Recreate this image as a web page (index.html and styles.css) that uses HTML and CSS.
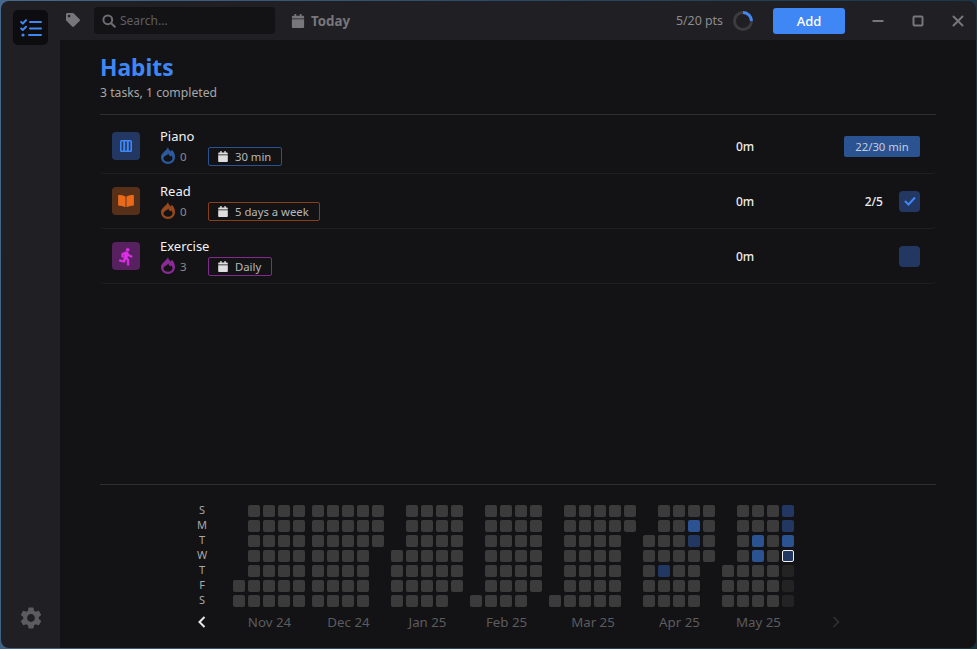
FILE: index.html
```html
<!DOCTYPE html>
<html lang="en">
<head>
    <meta charset="UTF-8">
    <title>Habits</title>
    <link rel="stylesheet" href="styles.css">
</head>
<body>
    <svg class="defs" width="0" height="0">
        <symbol id="i-cal" viewBox="0 0 448 512"><path fill="currentColor" d="M12 192h424c6.6 0 12 5.4 12 12v260c0 26.5-21.5 48-48 48H48c-26.5 0-48-21.5-48-48V204c0-6.6 5.4-12 12-12zm436-44v-36c0-26.5-21.5-48-48-48h-48V12c0-6.6-5.4-12-12-12h-40c-6.6 0-12 5.4-12 12v52H160V12c0-6.6-5.4-12-12-12h-40c-6.6 0-12 5.4-12 12v52H48C21.5 64 0 85.5 0 112v36c0 6.6 5.4 12 12 12h424c6.6 0 12-5.4 12-12z"/></symbol>
        <symbol id="i-flame" viewBox="0 0 14 17"><path fill="currentColor" fill-rule="evenodd" d="M7 0c.4 2.2 1.6 3.4 2.8 4.4.5-.5.8-1 1-1.6C12.9 4.6 14 7.4 14 10c0 4-3 7-7 7s-7-3-7-7C0 6 5.4 4 7 0zM7.3 6.4c-.9 1.8-4.8 2.6-4.8 4.8 0 2.2 2 3.6 4.5 3.6s4.5-1.4 4.5-3.6c0-1-.4-2-1.1-2.8-.3.4-.6.7-1 .9-.9-.7-1.8-1.5-2.1-2.9z"/></symbol>
    </svg>

    <div class="window">
        <aside class="sidebar">
            <div class="logo">
                <svg width="22" height="18" viewBox="0 0 22 18" fill="none" stroke="#3f87f5" stroke-width="2" stroke-linecap="round" stroke-linejoin="round">
                    <path d="M1.2 3 2.8 4.6 6 1.2M1.2 9.5 2.8 11 6 7.8"/>
                    <path d="M10 3h11M10 9.5h11M9 16h12"/>
                    <circle cx="3" cy="16" r="1.6" fill="#3f87f5" stroke="none"/>
                </svg>
            </div>
            <svg width="26" height="26" viewBox="0 0 24 24"><path fill="#5c5c60" d="M19.14 12.94c.04-.3.06-.61.06-.94 0-.32-.02-.64-.07-.94l2.03-1.58a.49.49 0 0 0 .12-.61l-1.92-3.32a.488.488 0 0 0-.59-.22l-2.39.96c-.5-.38-1.03-.7-1.62-.94l-.36-2.54a.484.484 0 0 0-.48-.41h-3.84c-.24 0-.43.17-.47.41l-.36 2.54c-.59.24-1.13.57-1.62.94l-2.39-.96c-.22-.08-.47 0-.59.22L2.74 8.87c-.12.21-.08.47.12.61l2.03 1.58c-.05.3-.09.63-.09.94s.02.64.07.94l-2.03 1.58a.49.49 0 0 0-.12.61l1.92 3.32c.12.22.37.29.59.22l2.39-.96c.5.38 1.03.7 1.62.94l.36 2.54c.05.24.24.41.48.41h3.84c.24 0 .44-.17.47-.41l.36-2.54c.59-.24 1.13-.56 1.62-.94l2.39.96c.22.08.47 0 .59-.22l1.92-3.32c.12-.22.07-.47-.12-.61l-2.01-1.58zM12 15.6c-1.98 0-3.6-1.62-3.6-3.6s1.62-3.6 3.6-3.6 3.6 1.62 3.6 3.6-1.62 3.6-3.6 3.6z"/></svg>
        </aside>

        <div class="content">
            <header class="topbar">
                <svg class="tag" width="14" height="14" viewBox="0 0 512 512"><path fill="#77777b" d="M0 252.118V48C0 21.49 21.49 0 48 0h204.118a48 48 0 0 1 33.941 14.059l211.882 211.882c18.745 18.745 18.745 49.137 0 67.882L293.823 497.941c-18.745 18.745-49.137 18.745-67.882 0L14.059 286.059A48 48 0 0 1 0 252.118zM112 64c-26.51 0-48 21.49-48 48s21.49 48 48 48 48-21.49 48-48-21.49-48-48-48z"/></svg>
                <div class="search">
                    <svg width="14" height="14" viewBox="0 0 14 14" fill="none" stroke="#6e6e72" stroke-width="2" stroke-linecap="round"><circle cx="5.8" cy="5.8" r="4.4"/><path d="M9.2 9.2 12.8 12.8"/></svg>
                    <span>Search...</span>
                </div>
                <div class="today">
                    <svg width="14" height="14"><use href="#i-cal"/></svg>
                    <span>Today</span>
                </div>
                <div class="points">
                    <span>5/20 pts</span>
                    <svg width="20" height="20" viewBox="0 0 20 20" fill="none" stroke-width="3"><circle cx="10" cy="10" r="8.5" stroke="#3c3c3e"/><path d="M10 1.5A8.5 8.5 0 0 1 18.5 10" stroke="#3f87f5"/></svg>
                </div>
                <button class="add">Add</button>
                <div class="win-controls">
                    <span class="win-btn"><svg width="12" height="12" viewBox="0 0 12 12" stroke="#77777b" stroke-width="2" fill="none"><path d="M0.5 6h11"/></svg></span>
                    <span class="win-btn"><svg width="12" height="12" viewBox="0 0 12 12" stroke="#77777b" stroke-width="2" fill="none"><rect x="1.5" y="1.5" width="9" height="9" rx="1"/></svg></span>
                    <span class="win-btn"><svg width="12" height="12" viewBox="0 0 12 12" stroke="#77777b" stroke-width="2" fill="none" stroke-linecap="round"><path d="M1.5 1.5l9 9M10.5 1.5l-9 9"/></svg></span>
                </div>
            </header>

            <main class="main">
                <div class="page-head">
                    <h1>Habits</h1>
                    <p>3 tasks, 1 completed</p>
                </div>

                <div class="habits">
                    <div class="habit">
                        <div class="tile tile-blue">
                            <svg width="12" height="12" viewBox="0 0 12 12"><rect width="12" height="12" rx="1.5" fill="currentColor"/><path fill="#233763" d="M1.6 1.6h1.6v8.8H1.6zM5.2 1.6h1.6v8.8H5.2zM8.8 1.6h1.6v8.8H8.8z"/></svg>
                        </div>
                        <div class="info">
                            <div class="name">Piano</div>
                            <div class="meta">
                                <svg class="flame flame-blue" width="14" height="17"><use href="#i-flame"/></svg>
                                <span class="streak">0</span>
                                <span class="goal goal-blue"><svg width="10" height="11"><use href="#i-cal"/></svg>30 min</span>
                            </div>
                        </div>
                        <div class="time">0m</div>
                        <div class="action"><span class="progress">22/30 min</span></div>
                    </div>

                    <div class="habit">
                        <div class="tile tile-orange">
                            <svg width="16" height="14" viewBox="0 0 576 512"><path fill="currentColor" d="M542.22 32.05c-54.8 3.11-163.72 14.43-230.96 55.59-4.64 2.84-7.27 7.89-7.27 13.17v363.87c0 11.55 12.63 18.85 23.28 13.49 69.18-34.82 169.23-44.32 218.7-46.92 16.89-.89 30.02-14.43 30.02-30.66V62.75c.01-17.71-15.35-31.74-33.77-30.7zM264.73 87.64C197.5 46.48 88.58 35.17 33.78 32.05 15.36 31.01 0 45.04 0 62.75V400.6c0 16.24 13.13 29.78 30.02 30.67 49.49 2.6 149.59 12.11 218.77 46.95 10.62 5.35 23.21-1.94 23.21-13.46V100.63c0-5.29-2.62-10.14-7.27-12.99z"/></svg>
                        </div>
                        <div class="info">
                            <div class="name">Read</div>
                            <div class="meta">
                                <svg class="flame flame-orange" width="14" height="17"><use href="#i-flame"/></svg>
                                <span class="streak">0</span>
                                <span class="goal goal-orange"><svg width="10" height="11"><use href="#i-cal"/></svg>5 days a week</span>
                            </div>
                        </div>
                        <div class="time">0m</div>
                        <div class="action">
                            <span class="count">2/5</span>
                            <span class="check"><svg width="12" height="10" viewBox="0 0 12 10" fill="none" stroke="#3f87f5" stroke-width="2"><path d="M1 5l3.5 3.5L11 1.5"/></svg></span>
                        </div>
                    </div>

                    <div class="habit">
                        <div class="tile tile-purple">
                            <svg width="19" height="19" viewBox="0 0 24 24"><path fill="currentColor" stroke="currentColor" stroke-width=".8" d="M13.49 5.48c1.1 0 2-.9 2-2s-.9-2-2-2-2 .9-2 2 .9 2 2 2zm-3.6 13.9l1-4.4 2.1 2v6h2v-7.5l-2.1-2 .6-3c1.3 1.5 3.3 2.5 5.5 2.5v-2c-1.9 0-3.5-1-4.3-2.4l-1-1.6c-.4-.6-1-1-1.7-1-.3 0-.5.1-.8.1l-5.2 2.2v4.7h2v-3.4l1.8-.7-1.6 8.1-4.9-1-.4 2 7 1.4z"/></svg>
                        </div>
                        <div class="info">
                            <div class="name">Exercise</div>
                            <div class="meta">
                                <svg class="flame flame-purple" width="14" height="17"><use href="#i-flame"/></svg>
                                <span class="streak">3</span>
                                <span class="goal goal-purple"><svg width="10" height="11"><use href="#i-cal"/></svg>Daily</span>
                            </div>
                        </div>
                        <div class="time">0m</div>
                        <div class="action"><span class="check"></span></div>
                    </div>
                </div>

                <section class="heat">
                    <div class="days">
                        <span>S</span><span>M</span><span>T</span><span>W</span><span>T</span><span>F</span><span>S</span>
                        <svg class="prev" width="8" height="12" viewBox="0 0 8 12" fill="none" stroke="#e8e8e8" stroke-width="2"><path d="M6.5 1 1.5 6l5 5"/></svg>
                    </div>
                    <div class="months" id="months"></div>
                    <svg class="next" width="8" height="12" viewBox="0 0 8 12" fill="none" stroke="#333336" stroke-width="1.5"><path d="M1.5 1l5 5-5 5"/></svg>
                </section>
            </main>
        </div>
    </div>
    <script src="heatmap.js"></script>
</body>
</html>
```

FILE: styles.css
```css
* {
    box-sizing: border-box;
}

html, body {
    height: 100%;
}

body {
    margin: 0;
    padding: 1px;
    overflow: hidden;
    background: linear-gradient(100deg, #46698c 0%, #2b4a66 45%, #17323f 100%);
    font-family: "Noto Sans", sans-serif;
    font-size: 12.2px;
    color: #e8e8e8;
}

.defs {
    position: absolute;
}

.window {
    display: flex;
    height: 100%;
    background: #1f1f24;
    border-radius: 8px;
    overflow: hidden;
}

.sidebar {
    width: 59px;
    flex-shrink: 0;
    display: flex;
    flex-direction: column;
    align-items: center;
    justify-content: space-between;
    padding: 9px 0 17px;
}

.logo {
    width: 35px;
    height: 35px;
    display: flex;
    align-items: center;
    justify-content: center;
    background: #0d0d10;
    border-radius: 5px;
}

.content {
    flex: 1;
    min-width: 0;
    display: flex;
    flex-direction: column;
}

.topbar {
    height: 39px;
    flex-shrink: 0;
    display: flex;
    align-items: center;
    padding-left: 6px;
}

.tag {
    margin-bottom: 1px;
}

.search {
    width: 181px;
    height: 27px;
    margin-left: 14px;
    padding-left: 8px;
    display: flex;
    align-items: center;
    gap: 4px;
    background: #131316;
    border-radius: 4px;
    color: #5f5f63;
    font-size: 12px;
}

.today {
    margin-left: 16px;
    display: flex;
    align-items: center;
    gap: 6px;
    color: #77777b;
    font-size: 13.3px;
    font-weight: 700;
}

.points {
    margin-left: auto;
    display: flex;
    align-items: center;
    gap: 10px;
    color: #8c8c90;
    font-size: 12.4px;
}

.add {
    width: 72px;
    height: 26px;
    margin-left: 20px;
    border: none;
    border-radius: 3px;
    background: #3f87f5;
    color: #fff;
    font-family: inherit;
    font-size: 13px;
    font-weight: 500;
}

.win-controls {
    display: flex;
    margin-left: 13px;
    margin-right: -2px;
}

.win-btn {
    width: 40px;
    display: flex;
    align-items: center;
    justify-content: center;
}

.main {
    flex: 1;
    min-height: 0;
    display: flex;
    flex-direction: column;
    padding: 14px 40px 0;
    background: #131316;
}

.page-head {
    padding-bottom: 12px;
    border-bottom: 1px solid #2e2e31;
}

.page-head h1 {
    margin: 0;
    font-size: 22.8px;
    line-height: 28px;
    font-weight: 700;
    color: #3f87f5;
}

.page-head p {
    margin: 1px 0 0;
    font-size: 12.2px;
    line-height: 19px;
    color: #a8a8a8;
}

.habits {
    margin-top: 4px;
}

.habit {
    height: 55px;
    display: grid;
    grid-template-columns: 28px 1fr 90px 130px;
    align-items: center;
    padding: 0 16px 0 12px;
    border-bottom: 1px solid #1f1f22;
    border-radius: 4px;
}

.tile {
    width: 28px;
    height: 28px;
    display: flex;
    align-items: center;
    justify-content: center;
    border-radius: 4px;
}

.tile-blue { background: #233763; color: #3f87f5; }
.tile-orange { background: #57301a; color: #ea6a1a; }
.tile-purple { background: #57215f; color: #e030ec; }

.info {
    margin-left: 20px;
    padding-top: 1px;
}

.name {
    font-size: 13px;
    line-height: 18px;
    font-weight: 400;
    color: #f2f2f2;
}

.meta {
    display: flex;
    align-items: center;
    height: 21px;
    margin-top: 1px;
    padding-left: 1px;
}

.flame {
    flex-shrink: 0;
    margin-top: -2px;
}

.flame-blue { color: #2b5a9f; }
.flame-orange { color: #98481c; }
.flame-purple { color: #8b2a96; }

.streak {
    width: 33px;
    padding-left: 5px;
    font-size: 11.5px;
    color: #8c8c8c;
}

.goal {
    height: 19px;
    display: inline-flex;
    align-items: center;
    gap: 7px;
    padding: 0 10px 0 9px;
    border: 1px solid;
    border-radius: 2px;
    font-size: 11.3px;
    color: #b8b8b8;
}

.goal svg { color: #dedede; }
.goal-blue { border-color: #2b5291; }
.goal-orange { border-color: #8a3f18; }
.goal-purple { border-color: #832a8e; }

.time {
    text-align: center;
    font-size: 12px;
    font-weight: 500;
    color: #ececec;
}

.action {
    display: flex;
    align-items: center;
    justify-content: flex-end;
    gap: 16px;
}

.progress {
    width: 76px;
    height: 21px;
    display: flex;
    align-items: center;
    justify-content: center;
    background: #2b5291;
    border-radius: 2px;
    font-size: 11.3px;
    color: #c5cedd;
}

.count {
    font-size: 12px;
    font-weight: 500;
    color: #ececec;
}

.check {
    width: 21px;
    height: 21px;
    display: flex;
    align-items: center;
    justify-content: center;
    background: #233763;
    border-radius: 4px;
}

.heat {
    margin-top: auto;
    display: flex;
    padding: 20px 0 17px 92px;
    border-top: 1px solid #2e2e31;
}

.days {
    width: 20px;
    margin-right: 21px;
    margin-top: -3px;
    display: flex;
    flex-direction: column;
    align-items: center;
    font-size: 11px;
    line-height: 15px;
    color: #a8a8a8;
}

.prev {
    margin-top: 9px;
    margin-left: -1px;
}

.months {
    display: flex;
    gap: 7px;
}

.month-grid {
    display: grid;
    grid-auto-flow: column;
    grid-template-rows: repeat(7, 12px);
    grid-auto-columns: 12px;
    gap: 3px;
}

.month-label {
    margin-top: 6px;
    padding-left: 1px;
    text-align: center;
    font-size: 13.3px;
    line-height: 18px;
    color: #5c5c5f;
}

.cell {
    border-radius: 2px;
    background: #3b3b3c;
}

.cell-none { background: none; }
.cell-high { background: #2b5291; }
.cell-low { background: #233763; }
.cell-today { background: #233763; border: 1px solid #f0f0f0; }
.cell-future { background: #232324; }

.next {
    align-self: flex-end;
    margin: 0 0 3px 38px;
}
```

FILE: heatmap.js
```js
// one string per week column, top row is Sunday
// # normal, . empty, h done, l partly done, t today, f future
const meses = [
    ['Nov 24', ['.....##', '#######', '#######', '#######', '#######']],
    ['Dec 24', ['#######', '#######', '#######', '#######', '###....']],
    ['Jan 25', ['...####', '#######', '#######', '#######', '######.']],
    ['Feb 25', ['......#', '#######', '#######', '#######', '######.']],
    ['Mar 25', ['......#', '#######', '#######', '#######', '#######', '##.....']],
    ['Apr 25', ['..#####', '####l##', '#######', '#hl####', '####...']],
    ['May 25', ['....###', '#######', '##hh###', '#######', 'llhtfff']]
];

const classes = { '.': 'cell-none', h: 'cell-high', l: 'cell-low', t: 'cell-today', f: 'cell-future' };
const container = document.getElementById('months');

meses.forEach(([nome, semanas]) => {
    const mes = document.createElement('div');
    const grid = document.createElement('div');
    grid.className = 'month-grid';

    semanas.join('').split('').forEach((c) => {
        const cell = document.createElement('div');
        cell.className = 'cell ' + (classes[c] || '');
        grid.appendChild(cell);
    });

    const label = document.createElement('div');
    label.className = 'month-label';
    label.innerText = nome;

    mes.appendChild(grid);
    mes.appendChild(label);
    container.appendChild(mes);
});
```
